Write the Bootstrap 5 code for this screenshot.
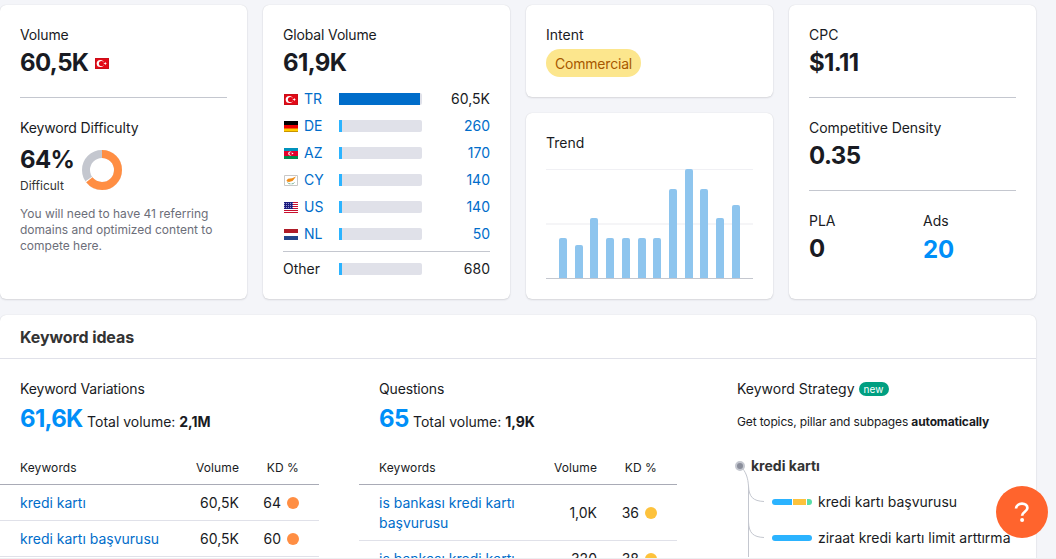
<!DOCTYPE html>
<html lang="en">
<head>
<meta charset="utf-8">
<meta name="viewport" content="width=device-width, initial-scale=1">
<title>Keyword Overview</title>
<link href="https://cdn.jsdelivr.net/npm/bootstrap@5.3.0/dist/css/bootstrap.min.css" rel="stylesheet">
<style>
body{font-family:Inter,"Liberation Sans",sans-serif;font-size:14px;line-height:20px;color:#191b23;background:#f4f5f9;height:559px;overflow:hidden}
a{color:#006dca;text-decoration:none}
.page{width:1036px;padding-top:5px;overflow:hidden;box-sizing:content-box;height:553px;padding-right:20px}
.page-edge{height:1px;background:#eeeff2}
.panel{background:#fff;border-radius:6px;box-shadow:0 0 1px rgba(25,27,35,.16),0 1px 2px rgba(25,27,35,.12)}
.summary{width:1036px;height:294px}
.caption{letter-spacing:-.15px}
.big{font-size:24px;line-height:28px;font-weight:700;margin:4px 0 0;letter-spacing:-.6px}
.accent{color:#008ff8}
.rule{border-top:1px solid #c4c7cf;margin:20px 0}
.note{font-size:12px;line-height:16px;color:#6c6e79}
.country{height:27px}
.country .code{width:56px}
.country svg{width:14px;height:11px;margin:1px 6px 0 1px}
.meter{width:83px;height:12px;background:#e0e1e9;border-radius:0 2px 2px 0;overflow:hidden}
.meter span{display:block;height:12px;background:#2bb3ff}
.pill{background:#fce68d;color:#a75800;height:28px;border-radius:14px;padding:5px 9px;line-height:20px;margin-top:4px;letter-spacing:-.2px}
.chart{height:110px;margin-top:16px;border-bottom:1px solid #c4c7cf;padding:0 13px;background:linear-gradient(#f0f0f4,#f0f0f4) 0 0/100% 1px no-repeat,linear-gradient(#f5f5f7,#f5f5f7) 0 54px/100% 2px no-repeat}
.chart i{width:8px;background:#8ec5ee;border-radius:2px 2px 0 0}
.ideas{margin-top:16px;height:300px;width:1036px}
.ideas h2{font-size:16px;line-height:24px;font-weight:700;color:#333;margin:0;padding:10px 20px 9px;border-bottom:1px solid #e0e1e9;letter-spacing:-.1px}
.total{height:38px;margin-top:1px}
.total .big{line-height:38px;letter-spacing:-.7px;margin-right:.5px}
.kw{border-collapse:collapse;table-layout:fixed;width:319px;margin-top:14px}
.kw th{font-size:12px;font-weight:400;letter-spacing:.1px;line-height:16px;padding:8px 0;border-bottom:1px solid #a9abb6}
.kw td{padding:8px 0 7px;border-bottom:1px solid #e0e1e9}
.dot{display:inline-block;width:12px;height:12px;border-radius:50%;margin-left:6px;vertical-align:-1px}
.new-tag{font-size:10px;line-height:14px;height:14px;letter-spacing:.1px;background:#009f81;color:#fff;border-radius:7px;padding:0 5px;margin-left:4px}
.intro{font-size:12px;margin-top:13px;letter-spacing:-.14px}
.tree{margin:15px 0 0 -3px;position:relative}
.tree>svg{position:absolute;left:0;top:0}
.root{height:37px;padding-left:17px;line-height:38px;color:#333}
.topic{height:36px;padding-left:38px;gap:6px}
.help{right:8px;top:486px;width:52px;height:52px;background:#ff642d}
.help:hover{background:#ff642d}
</style>
</head>
<body>
<svg width="0" height="0" class="position-absolute">
<symbol id="tr" viewBox="0 0 14 11"><path fill="#e30a17" d="M0 0h14v11H0z"/><path fill="none" stroke="#b8101b" stroke-opacity=".6" d="M.5.5h13v10H.5z"/><circle cx="5.3" cy="5.5" r="3.600" fill="#fff"/><circle cx="6.5" cy="5.500" r="2.600" fill="#e30a17"/><path fill="#fff" d="m8.300 5.500 1.400-.5.8-1.200.2 1.300 1.300.4-1.300.5-.2 1.200-.8-1.200z"/></symbol>
<symbol id="de" viewBox="0 0 14 11"><path d="M0 0h14v4H0z"/><path fill="#e00" d="M0 4h14v4H0z"/><path fill="#fc0" d="M0 7.500h14v3.500H0z"/><path d="M0 10.500h14" stroke="#c99400"/></symbol>
<symbol id="az" viewBox="0 0 14 11"><path fill="#0092bc" d="M0 0h14v4H0z"/><path fill="#e4002b" d="M0 3h14v5H0z"/><path fill="#008c4f" d="M0 8h14v3H0z"/><circle cx="6.2" cy="5.500" r="2" fill="#fff"/><circle cx="6.900" cy="5.500" r="1.500" fill="#e4002b"/><circle cx="8.500" cy="5.500" r=".8" fill="#fff"/></symbol>
<symbol id="cy" viewBox="0 0 14 11"><path fill="#fff" stroke="#c8c8c8" d="M.5.5h13v10H.5z"/><path fill="#ef8d1a" d="M2.500 5.500 4 3.800l4-.5L12 1.500 10 4.200 8.500 6 5 7 3 6.500z"/><path d="M3.500 7.500q1 1.400 3 1.400M10.500 7.500q-1 1.400-3 1.400" stroke="#7cb89a" fill="none"/></symbol>
<symbol id="us" viewBox="0 0 14 11"><path fill="#fff" d="M0 0h14v11H0z"/><path d="M0 .5h14M0 2.500h14M0 4.500h14M0 6.500h14M0 8.500h14M0 10.500h14" stroke="#c8102e"/><path fill="#1d1d80" d="M0 0h9v7H0z"/><path d="M0 1.500h9M0 3.500h9M0 5.500h9" stroke="#9a9acb" stroke-dasharray="1 1"/></symbol>
<symbol id="nl" viewBox="0 0 14 11"><path fill="#ae1c28" d="M0 0h14v4H0z"/><path fill="#fff" d="M0 4h14v3H0z"/><path fill="#21468b" d="M0 7h14v4H0z"/></symbol>
</svg>

<main class="page">
<div class="summary">
<div class="row gx-3 flex-nowrap h-100">
  <div class="col-3"><section class="panel h-100" style="padding:20px">
    <div class="caption">Volume</div>
    <div class="big d-flex align-items-center">60,5K<svg width="14" height="11" style="margin:1px 0 0 6px"><use href="#tr"/></svg></div>
    <div class="rule"></div>
    <div class="caption">Keyword Difficulty</div>
    <div class="d-flex">
      <div><div class="big" style="margin-top:8px">64%</div><div style="font-size:12px;line-height:16px;margin-top:4px;color:#333">Difficult</div></div>
      <svg width="40" height="40" viewBox="-20 -20 40 40" style="margin:12px 0 0 8px"><g fill="none" stroke-width="8" transform="rotate(-90)"><circle r="16" stroke="#c4c7cf"/><circle r="16" stroke="#fff" pathLength="100" stroke-dasharray="65.500 100"/><circle r="16" stroke="#ff8e43" pathLength="100" stroke-dasharray="64.500 100"/></g></svg>
    </div>
    <div class="note" style="margin-top:12px">You will need to have 41 referring<br>domains and optimized content to<br>compete here.</div>
  </section></div>

  <div class="col-3"><section class="panel h-100" style="padding:20px">
    <div class="caption">Global Volume</div>
    <div class="big" style="margin-bottom:8px">61,9K</div>
    <div class="country d-flex align-items-center"><a class="code d-flex align-items-center" href="#"><svg><use href="#tr"/></svg>TR</a><div class="meter"><span style="width:81px;background:#006dca"></span></div><span class="ms-auto">60,5K</span></div>
    <div class="country d-flex align-items-center"><a class="code d-flex align-items-center" href="#"><svg><use href="#de"/></svg>DE</a><div class="meter"><span style="width:3px"></span></div><a class="ms-auto" href="#">260</a></div>
    <div class="country d-flex align-items-center"><a class="code d-flex align-items-center" href="#"><svg><use href="#az"/></svg>AZ</a><div class="meter"><span style="width:3px"></span></div><a class="ms-auto" href="#">170</a></div>
    <div class="country d-flex align-items-center"><a class="code d-flex align-items-center" href="#"><svg><use href="#cy"/></svg>CY</a><div class="meter"><span style="width:3px"></span></div><a class="ms-auto" href="#">140</a></div>
    <div class="country d-flex align-items-center"><a class="code d-flex align-items-center" href="#"><svg><use href="#us"/></svg>US</a><div class="meter"><span style="width:3px"></span></div><a class="ms-auto" href="#">140</a></div>
    <div class="country d-flex align-items-center"><a class="code d-flex align-items-center" href="#"><svg><use href="#nl"/></svg>NL</a><div class="meter"><span style="width:3px"></span></div><a class="ms-auto" href="#">50</a></div>
    <div class="rule" style="margin:4px 0 3px"></div>
    <div class="country d-flex align-items-center"><span class="code">Other</span><div class="meter"><span style="width:3px"></span></div><span class="ms-auto">680</span></div>
  </section></div>

  <div class="col-3 d-flex flex-column gap-3">
    <section class="panel" style="height:92px;padding:20px"><div>Intent</div><span class="pill d-inline-block text-nowrap">Commercial</span></section>
    <section class="panel flex-fill" style="padding:20px"><div>Trend</div>
      <div class="chart d-flex justify-content-between align-items-end">
        <i style="height:40px"></i><i style="height:33px"></i><i style="height:60px"></i><i style="height:40px"></i><i style="height:40px"></i><i style="height:40px"></i><i style="height:40px"></i><i style="height:89px"></i><i style="height:109px"></i><i style="height:89px"></i><i style="height:60px"></i><i style="height:73px"></i>
      </div>
    </section>
  </div>

  <div class="col-3"><section class="panel h-100" style="padding:20px">
    <div>CPC</div><div class="big">$1.11</div>
    <div class="rule"></div>
    <div style="letter-spacing:-.05px">Competitive Density</div><div class="big">0.35</div>
    <div class="rule"></div>
    <div class="d-flex">
      <div style="width:114px"><div>PLA</div><div class="big">0</div></div>
      <div><div>Ads</div><div class="big accent" style="letter-spacing:0;margin-top:5px">20</div></div>
    </div>
  </section></div>
</div>
</div>

<section class="panel ideas">
  <h2>Keyword ideas</h2>
  <div class="d-flex" style="padding-top:20px">
    <div style="width:359px">
      <div style="padding-left:20px"><div class="caption">Keyword Variations</div><div class="total text-nowrap"><span class="big accent">61,6K</span> Total volume: <b>2,1M</b></div></div>
      <table class="kw"><colgroup><col style="width:180px"><col style="width:59px"><col style="width:60px"><col style="width:20px"></colgroup>
        <tr><th style="padding-left:20px">Keywords</th><th class="text-end">Volume</th><th class="text-end">KD %</th><th></th></tr>
        <tr><td style="padding-left:20px"><a href="#">kredi kartı</a></td><td class="text-end">60,5K</td><td class="text-end">64<span class="dot" style="background:#ff8e43"></span></td><td></td></tr>
        <tr><td style="padding-left:20px"><a href="#">kredi kartı başvurusu</a></td><td class="text-end">60,5K</td><td class="text-end">60<span class="dot" style="background:#ff8e43"></span></td><td></td></tr>
      </table>
    </div>
    <div style="width:378px">
      <div style="padding-left:20px"><div class="caption">Questions</div><div class="total text-nowrap"><span class="big accent">65</span> Total volume: <b>1,9K</b></div></div>
      <table class="kw" style="width:318px"><colgroup><col style="width:180px"><col style="width:58px"><col style="width:60px"><col style="width:20px"></colgroup>
        <tr><th style="padding-left:20px">Keywords</th><th class="text-end">Volume</th><th class="text-end">KD %</th><th></th></tr>
        <tr><td style="padding-left:20px"><a href="#">is bankası kredi kartı<br>başvurusu</a></td><td class="text-end">1,0K</td><td class="text-end">36<span class="dot" style="background:#fdc23c"></span></td><td></td></tr>
        <tr><td style="padding-left:20px"><a href="#">is bankası kredi kartı</a></td><td class="text-end">320</td><td class="text-end">38<span class="dot" style="background:#fdc23c"></span></td><td></td></tr>
      </table>
    </div>
    <div class="text-nowrap">
      <div class="d-flex align-items-center">Keyword Strategy<span class="new-tag">new</span></div>
      <div class="intro">Get topics, pillar and subpages <b>automatically</b></div>
      <div class="tree">
        <svg width="42" height="110" fill="none" stroke="#c4c7cf"><path d="M9 22C12 26 14 31 14.500 39V110M14.500 39C15 50 19 54 30 54.500M14.500 75C15 86 19 90 30 90.500"/><circle cx="6" cy="19" r="4" fill="#8a8e9b" stroke-width="2"/></svg>
        <div class="root"><b>kredi kartı</b></div>
        <div class="topic d-flex align-items-center"><svg width="40" height="6"><defs><clipPath id="round"><rect width="40" height="6" rx="3"/></clipPath></defs><g clip-path="url(#round)"><path fill="#2bb3ff" d="M0 0h20v6H0z"/><path fill="#fdc23c" d="M21 0h13v6H21z"/><path fill="#59ddaa" d="M35 0h5v6h-5z"/></g></svg>kredi kartı başvurusu</div>
        <div class="topic d-flex align-items-center"><svg width="40" height="6"><rect width="40" height="6" rx="3" fill="#2bb3ff"/></svg>ziraat kredi kartı limit arttırma</div>
      </div>
    </div>
  </div>
</section>
</main>
<div class="page-edge"></div>
<button class="help btn rounded-circle position-fixed border-0 p-0 d-flex align-items-center justify-content-center" aria-label="Help"><svg width="16" height="22" fill="none" stroke="#fff" stroke-width="2.700"><path d="M2 7.500C2.200 4.500 4.800 2.700 8 2.700c3.200 0 5.400 1.800 5.400 4.300 0 3.800-5.300 3.800-5.300 7.800"/><circle cx="8.100" cy="18.900" r="2" fill="#fff" stroke="none"/></svg></button>
<script src="https://cdn.jsdelivr.net/npm/bootstrap@5.3.0/dist/js/bootstrap.bundle.min.js"></script>
</body>
</html>
